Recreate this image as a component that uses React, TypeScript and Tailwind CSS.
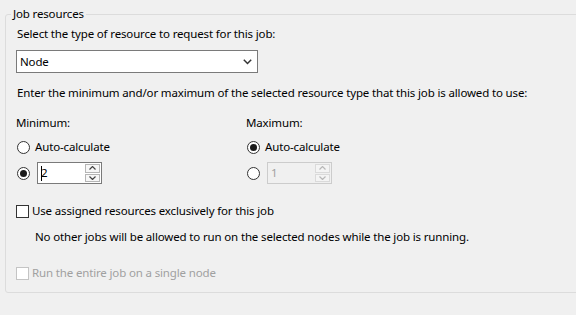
import { FC } from "react";

const font = { fontFamily: '"Segoe UI", "Noto Sans", sans-serif' };

const Radio: FC<{ checked?: boolean }> = ({ checked }) => (
    <span className="w-[13px] h-[13px] rounded-full border border-[#333] bg-white flex items-center justify-center shrink-0">
        {checked && <span className="w-[7px] h-[7px] rounded-full bg-[#1a1a1a]" />}
    </span>
);

const Check: FC<{ disabled?: boolean }> = ({ disabled }) => (
    <span className={`w-[13px] h-[13px] border bg-white shrink-0 ${disabled ? "border-[#c4c4c4]" : "border-[#333]"}`} />
);

const Arrow: FC<{ up?: boolean; disabled?: boolean }> = ({ up, disabled }) => (
    <svg width="7" height="4" viewBox="0 0 7 4">
        <polyline
            points={up ? "0.5,3.5 3.5,0.5 6.5,3.5" : "0.5,0.5 3.5,3.5 6.5,0.5"}
            fill="none"
            stroke={disabled ? "#b8b8b8" : "#444"}
            strokeWidth="1.2"
        />
    </svg>
);

const Spinner: FC<{ value: string; disabled?: boolean }> = ({ value, disabled }) => (
    <div className={`w-[65px] h-[22px] border flex ${disabled ? "border-[#cccccc] bg-[#f0f0f0]" : "border-[#7a7a7a] bg-white"}`}>
        <div className={`flex-1 flex items-center pl-[3px] ${disabled ? "text-[#a0a0a0]" : "text-black"}`}>
            {!disabled && <span className="w-px h-[15px] bg-black -mr-px" />}
            <span>{value}</span>
        </div>
        <div className="w-[17px] flex flex-col gap-px p-px">
            <div className={`flex-1 border flex items-center justify-center ${disabled ? "border-[#dadada] bg-[#f4f4f4]" : "border-[#b5b5b5] bg-[#f7f7f7]"}`}>
                <Arrow up disabled={disabled} />
            </div>
            <div className={`flex-1 border flex items-center justify-center ${disabled ? "border-[#dadada] bg-[#f4f4f4]" : "border-[#b5b5b5] bg-[#f7f7f7]"}`}>
                <Arrow disabled={disabled} />
            </div>
        </div>
    </div>
);

export default function App() {
    return (
        <div className="w-[576px] h-[315px] bg-[#f0f0f0] overflow-hidden pt-[6px] pl-[5px] text-[11.5px] tracking-[-0.15px] text-black" style={font}>
            <fieldset className="w-[620px] h-[287px] border border-[#dcdcdc] rounded-[3px] pl-[10px]">
                <legend className="-ml-[5px] px-[2px] leading-4">Job resources</legend>
                <div className="leading-4 mt-[4px] pl-px">Select the type of resource to request for this job:</div>
                <div className="mt-[8px] w-[242px] h-[23px] border border-[#7a7a7a] bg-white flex items-center justify-between pl-[3px] pr-[5px]">
                    <span>Node</span>
                    <svg width="9" height="6" viewBox="0 0 9 6">
                        <polyline points="0.8,0.8 4.5,4.5 8.2,0.8" fill="none" stroke="#333" strokeWidth="1.5" />
                    </svg>
                </div>
                <div className="leading-4 mt-[12px] pl-px">Enter the minimum and/or maximum of the selected resource type that this job is allowed to use:</div>
                <div className="flex mt-[14px]">
                    <div className="w-[230px] flex flex-col">
                        <span className="leading-4">Minimum:</span>
                        <div className="flex items-center gap-[5px] h-4 mt-[8px] pl-px">
                            <Radio />
                            <span>Auto-calculate</span>
                        </div>
                        <div className="flex items-center gap-[7px] mt-[7px] pl-px">
                            <Radio checked />
                            <Spinner value="2" />
                        </div>
                    </div>
                    <div className="flex flex-col">
                        <span className="leading-4">Maximum:</span>
                        <div className="flex items-center gap-[5px] h-4 mt-[8px] pl-px">
                            <Radio checked />
                            <span>Auto-calculate</span>
                        </div>
                        <div className="flex items-center gap-[7px] mt-[7px] pl-px">
                            <Radio />
                            <Spinner value="1" disabled />
                        </div>
                    </div>
                </div>
                <div className="flex items-center gap-[3px] h-4 mt-[19px]">
                    <Check />
                    <span>Use assigned resources exclusively for this job</span>
                </div>
                <div className="leading-4 mt-[10px] pl-[19px]">No other jobs will be allowed to run on the selected nodes while the job is running.</div>
                <div className="flex items-center gap-[3px] h-4 mt-[20px] text-[#a0a0a0]">
                    <Check disabled />
                    <span>Run the entire job on a single node</span>
                </div>
            </fieldset>
        </div>
    );
}
